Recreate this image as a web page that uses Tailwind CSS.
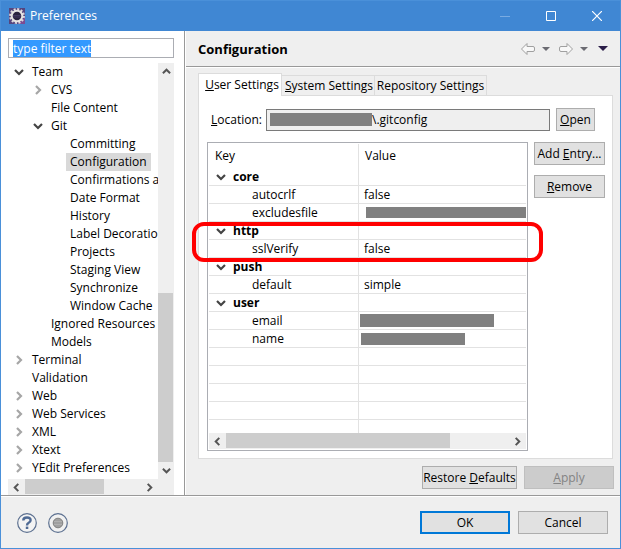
<!DOCTYPE html>
<html lang="en">
<head>
<meta charset="utf-8">
<title>Preferences</title>
<script src="https://cdn.jsdelivr.net/npm/@tailwindcss/browser@4"></script>
</head>
<body class="flex h-screen flex-col overflow-hidden border border-[#4a90d9] bg-[#efefef] font-['Open_Sans','Noto_Sans',sans-serif] text-[12px] leading-[18px] text-black">

<svg class="hidden" aria-hidden="true">
  <symbol id="down" viewBox="0 0 10 10"><path d="M1 3 5 7 9 3" fill="none" stroke="currentColor" stroke-width="2.200"/></symbol>
  <symbol id="right" viewBox="0 0 10 10"><path d="M3 1 7 5 3 9" fill="none" stroke="currentColor" stroke-width="2.200"/></symbol>
  <symbol id="left" viewBox="0 0 10 10"><path d="M7 1 3 5 7 9" fill="none" stroke="currentColor" stroke-width="2.200"/></symbol>
  <symbol id="up" viewBox="0 0 10 10"><path d="M1 7 5 3 9 7" fill="none" stroke="currentColor" stroke-width="2.200"/></symbol>
  <symbol id="caret" viewBox="0 0 8 4"><path d="M0 0h8L4 4z" fill="currentColor"/></symbol>
  <symbol id="arrow" viewBox="0 0 16 14"><path d="M1.500 7 7 1.500V4.500H13Q14.500 4.500 14.500 6V8Q14.500 9.500 13 9.500H7V12.500Z" fill="#f8f8f8" stroke="#a0a0a0" stroke-linejoin="round"/></symbol>
</svg>

<header class="flex h-[30px] shrink-0 items-center bg-[#4087d3] pl-2 text-white">
  <svg class="size-4" viewBox="0 0 16 16" aria-hidden="true">
    <rect width="16" height="16" fill="#54457f"/>
    <path d="M9 16 16 9V16Z" fill="#7c4c92"/>
    <circle cx="8" cy="8" r="6.700" fill="none" stroke="#ddd9dc" stroke-width="2.400" stroke-dasharray="2 1.508"/>
    <circle cx="8" cy="8" r="5.300" fill="#2b2440" stroke="#e6e3e3" stroke-width="2"/>
    <path d="M4 7.500h8M4 9h8" stroke="#4d4470" stroke-width=".7"/>
  </svg>
  <h1 class="ml-[5px]">Preferences</h1>
  <div class="ml-auto flex h-full">
    <button class="flex w-[46px] items-center justify-center" aria-label="Minimize" disabled><svg class="size-[10px]" viewBox="0 0 10 10"><path d="M0 5.500h10" stroke="#79abe2"/></svg></button>
    <button class="flex w-[46px] items-center justify-center" aria-label="Maximize"><svg class="size-[10px]" viewBox="0 0 10 10"><path d="M.5.5h9v9h-9z" fill="none" stroke="white"/></svg></button>
    <button class="flex w-[46px] items-center justify-center" aria-label="Close"><svg class="size-[10px]" viewBox="0 0 10 10"><path d="m0 0 10 10M10 0 0 10" stroke="white" stroke-width="1.200"/></svg></button>
  </div>
</header>

<main class="flex min-h-0 flex-1">
  <aside class="flex w-[184px] shrink-0 flex-col border-r border-[#999] bg-white pt-[7px] pr-[10px] pl-[7px]">
    <input id="filter" type="text" aria-label="Filter preferences" value="type filter text" class="h-[20px] w-full shrink-0 border border-[#abadb3] bg-white px-1 outline-none selection:bg-[#3399ff] selection:text-white">
    <div class="mt-[5px] flex min-h-0 flex-1">
      <nav class="min-w-0 flex-1 overflow-hidden whitespace-nowrap" aria-label="Preference pages">
        <ul>
          <li>
            <div class="flex pl-[6px]"><button class="mr-2 flex w-[10px] items-center text-[#444]" aria-label="Collapse Team"><svg class="size-[10px]"><use href="#down"/></svg></button>Team</div>
            <ul>
              <li class="flex pl-[25px]"><button class="mr-2 flex w-[10px] items-center text-[#a6a6a6]" aria-label="Expand CVS"><svg class="size-[10px]"><use href="#right"/></svg></button>CVS</li>
              <li class="pl-[43px]">File Content</li>
              <li>
                <div class="flex pl-[25px]"><button class="mr-2 flex w-[10px] items-center text-[#444]" aria-label="Collapse Git"><svg class="size-[10px]"><use href="#down"/></svg></button>Git</div>
                <ul class="pl-[58px]">
                  <li class="px-1">Committing</li>
                  <li class="w-fit bg-[#d9d9d9] px-1" aria-current="page">Configuration</li>
                  <li class="px-1">Confirmations and Warnings</li>
                  <li class="px-1">Date Format</li>
                  <li class="px-1">History</li>
                  <li class="px-1">Label Decorations</li>
                  <li class="px-1">Projects</li>
                  <li class="px-1">Staging View</li>
                  <li class="px-1">Synchronize</li>
                  <li class="px-1">Window Cache</li>
                </ul>
              </li>
              <li class="pl-[43px]">Ignored Resources</li>
              <li class="pl-[43px]">Models</li>
            </ul>
          </li>
          <li class="flex pl-[6px]"><button class="mr-2 flex w-[10px] items-center text-[#a6a6a6]" aria-label="Expand Terminal"><svg class="size-[10px]"><use href="#right"/></svg></button>Terminal</li>
          <li class="pl-6">Validation</li>
          <li class="flex pl-[6px]"><button class="mr-2 flex w-[10px] items-center text-[#a6a6a6]" aria-label="Expand Web"><svg class="size-[10px]"><use href="#right"/></svg></button>Web</li>
          <li class="flex pl-[6px]"><button class="mr-2 flex w-[10px] items-center text-[#a6a6a6]" aria-label="Expand Web Services"><svg class="size-[10px]"><use href="#right"/></svg></button>Web Services</li>
          <li class="flex pl-[6px]"><button class="mr-2 flex w-[10px] items-center text-[#a6a6a6]" aria-label="Expand XML"><svg class="size-[10px]"><use href="#right"/></svg></button>XML</li>
          <li class="flex pl-[6px]"><button class="mr-2 flex w-[10px] items-center text-[#a6a6a6]" aria-label="Expand Xtext"><svg class="size-[10px]"><use href="#right"/></svg></button>Xtext</li>
          <li class="flex pl-[6px]"><button class="mr-2 flex w-[10px] items-center text-[#a6a6a6]" aria-label="Expand YEdit Preferences"><svg class="size-[10px]"><use href="#right"/></svg></button>YEdit Preferences</li>
        </ul>
      </nav>
      <div class="flex w-4 flex-col bg-[#efefef] text-[#555]">
        <button class="flex h-[17px] items-center justify-center" aria-label="Scroll up"><svg class="size-[9px]"><use href="#up"/></svg></button>
        <div class="grow-[212]"></div>
        <div class="w-[15px] grow-[169] bg-[#cdcdcd]"></div>
        <button class="flex h-[17px] items-center justify-center" aria-label="Scroll down"><svg class="size-[9px]"><use href="#down"/></svg></button>
      </div>
    </div>
    <div class="flex h-4 shrink-0 bg-[#efefef] pr-4 text-[#555]">
      <button class="flex w-[17px] items-center justify-center" aria-label="Scroll left"><svg class="size-[9px]"><use href="#left"/></svg></button>
      <div class="h-[15px] grow-[79] bg-[#cdcdcd]"></div>
      <div class="grow-[37]"></div>
      <button class="flex w-[17px] items-center justify-center" aria-label="Scroll right"><svg class="size-[9px]"><use href="#right"/></svg></button>
    </div>
  </aside>

  <section class="flex min-w-0 flex-1 flex-col border-l border-white">
    <div class="border-b border-[#999]">
      <div class="flex h-[35px] items-center px-3">
        <h2 class="text-[13px] font-bold">Configuration</h2>
        <div class="ml-auto flex items-center text-[#6b6b72]">
          <button aria-label="Back"><svg class="h-[14px] w-4"><use href="#arrow"/></svg></button>
          <button class="ml-[6px]" aria-label="Back history"><svg class="h-1 w-2"><use href="#caret"/></svg></button>
          <button class="ml-2 -scale-x-100" aria-label="Forward"><svg class="h-[14px] w-4"><use href="#arrow"/></svg></button>
          <button class="ml-[6px]" aria-label="Forward history"><svg class="h-1 w-2"><use href="#caret"/></svg></button>
          <button class="ml-[10px] text-[#2a1d48]" aria-label="Menu"><svg class="h-[5px] w-[10px]"><use href="#caret"/></svg></button>
        </div>
      </div>
    </div>
    <div class="flex min-h-0 flex-1 flex-col border-t border-white pt-[5px] pr-[6px] pb-[6px] pl-3">
      <div class="relative z-10 flex items-end whitespace-nowrap" role="tablist">
        <button role="tab" aria-selected="true" class="-mb-px h-[23px] w-[84px] border border-b-0 border-[#dcdcdc] bg-white pl-1"><u>U</u>ser Settings</button>
        <button role="tab" aria-selected="false" class="h-5 w-[93px] border-t border-r border-[#dcdcdc] pl-[2px]"><u>S</u>ystem Settings</button>
        <button role="tab" aria-selected="false" class="h-5 w-[112px] border-t border-r border-[#dcdcdc]">Repository Sett<u>i</u>ngs</button>
      </div>
      <div role="tabpanel" class="mr-px flex min-h-0 flex-1 flex-col border border-[#dcdcdc] bg-white pt-3 pr-[7px] pb-[7px] pl-2">
        <div class="flex items-center pr-[10px]">
          <label for="location" class="w-[59px] pl-1"><u>L</u>ocation:</label>
          <div class="relative flex-1">
            <input id="location" type="text" readonly value="\.gitconfig" class="block h-[22px] w-full border border-[#7a7a7a] bg-[#efefef] pl-[105px] outline-none">
            <span class="absolute top-1 left-1 h-[13px] w-[102px] bg-[#808080]"></span>
          </div>
          <button class="ml-[6px] h-[23px] w-[39px] border border-[#adadad] bg-[#e1e1e1]"><u>O</u>pen</button>
        </div>
        <div class="mt-[11px] flex min-h-0 flex-1">
          <div class="relative flex min-w-0 flex-1 flex-col border border-[#abadb3] p-px">
            <div class="min-h-0 flex-1 overflow-hidden">
              <table class="w-full table-fixed border-separate border-spacing-0 text-left whitespace-nowrap">
                <colgroup><col class="w-[150px]"><col></colgroup>
                <thead><tr class="h-[24px]"><th class="border-r border-[#e2e2e2] p-0 pl-[6px] font-normal">Key</th><th class="p-0 pl-[6px] font-normal">Value</th></tr></thead>
                <tbody class="[&_td]:h-[18px] [&_td]:border-b [&_td]:border-[#e2e2e2] [&_td]:p-0 [&_td]:leading-[17px] [&_td:first-child]:border-r">
                  <tr><td class="font-bold"><div class="flex pl-[7px]"><button class="mr-[7px] flex w-[10px] items-center text-[#444]" aria-label="Collapse core"><svg class="size-[10px]"><use href="#down"/></svg></button>core</div></td><td></td></tr>
                  <tr><td><div class="pl-[43px]">autocrlf</div></td><td><div class="pl-[5px]">false</div></td></tr>
                  <tr><td><div class="pl-[43px]">excludesfile</div></td><td><div class="ml-[7px] h-[11px] bg-[#808080]"></div></td></tr>
                  <tr><td class="font-bold"><div class="flex pl-[7px]"><button class="mr-[7px] flex w-[10px] items-center text-[#444]" aria-label="Collapse http"><svg class="size-[10px]"><use href="#down"/></svg></button>http</div></td><td></td></tr>
                  <tr><td><div class="pl-[43px]">sslVerify</div></td><td><div class="pl-[5px]">false</div></td></tr>
                  <tr><td class="font-bold"><div class="flex pl-[7px]"><button class="mr-[7px] flex w-[10px] items-center text-[#444]" aria-label="Collapse push"><svg class="size-[10px]"><use href="#down"/></svg></button>push</div></td><td></td></tr>
                  <tr><td><div class="pl-[43px]">default</div></td><td><div class="pl-[5px]">simple</div></td></tr>
                  <tr><td class="font-bold"><div class="flex pl-[7px]"><button class="mr-[7px] flex w-[10px] items-center text-[#444]" aria-label="Collapse user"><svg class="size-[10px]"><use href="#down"/></svg></button>user</div></td><td></td></tr>
                  <tr><td><div class="pl-[43px]">email</div></td><td><div class="ml-px h-[13px] w-[134px] bg-[#808080]"></div></td></tr>
                  <tr><td><div class="pl-[43px]">name</div></td><td><div class="ml-[2px] h-3 w-[104px] bg-[#808080]"></div></td></tr>
                  <tr><td></td><td></td></tr>
                  <tr><td></td><td></td></tr>
                  <tr><td></td><td></td></tr>
                  <tr><td></td><td></td></tr>
                  <tr><td></td><td></td></tr>
                </tbody>
              </table>
            </div>
            <div class="flex h-4 shrink-0 bg-[#efefef] text-[#555]">
              <button class="flex w-[17px] items-center justify-center" aria-label="Scroll left"><svg class="size-[9px]"><use href="#left"/></svg></button>
              <div class="h-[15px] grow-[224] bg-[#cdcdcd]"></div>
              <div class="grow-[59]"></div>
              <button class="flex w-[17px] items-center justify-center" aria-label="Scroll right"><svg class="size-[9px]"><use href="#right"/></svg></button>
            </div>
            <!-- Highlight around the http section -->
            <div class="pointer-events-none absolute top-[79px] -right-4 -left-4 h-10 rounded-[12px] border-4 border-[#ff0000]"></div>
          </div>
          <div class="ml-[6px] flex w-[71px] flex-col gap-[10px]">
            <button class="h-[23px] border border-[#adadad] bg-[#e1e1e1] whitespace-nowrap">Add <u>E</u>ntry...</button>
            <button class="h-[23px] border border-[#adadad] bg-[#e1e1e1]"><u>R</u>emove</button>
          </div>
        </div>
      </div>
      <div class="mt-[7px] flex justify-end gap-[7px]">
        <button class="h-[23px] w-[95px] border border-[#adadad] bg-[#e1e1e1] whitespace-nowrap">Restore <u>D</u>efaults</button>
        <button class="h-[23px] w-[90px] border border-[#bfbfbf] bg-[#cccccc] text-[#838383]" disabled><u>A</u>pply</button>
      </div>
    </div>
  </section>
</main>

<footer class="shrink-0 border-t border-[#999]">
  <div class="flex h-[52px] items-center border-t border-white pr-3 pl-4">
    <button aria-label="Help"><svg class="size-5" viewBox="0 0 20 20"><circle cx="10" cy="10" r="9.300" fill="#f3f3f3" stroke="#5c7090" stroke-width="1.200"/><path d="M6.300 7.500Q6.300 4.500 10 4.500T13.600 7.300Q13.600 8.800 11.700 9.800 10 10.700 10 12.500" fill="none" stroke="#4f6a94" stroke-width="2.400"/><rect x="8.800" y="13.600" width="2.500" height="2.400" fill="#4f6a94"/></svg></button>
    <button class="ml-[11px]" aria-label="Oomph recorder"><svg class="size-5" viewBox="0 0 20 20"><circle cx="10" cy="10" r="9.300" fill="#f1f1f1" stroke="#5c7090" stroke-width="1.200"/><circle cx="10" cy="10" r="4.800" fill="#a0a0a0" stroke="#808080"/><path d="M6 8.500h8M6 11.500h8" stroke="#b0b0b0"/></svg></button>
    <button class="ml-auto h-[23px] w-[90px] border-2 border-[#0078d7] bg-[#e1e1e1] leading-4">OK</button>
    <button class="ml-2 h-[23px] w-[90px] border border-[#adadad] bg-[#e1e1e1]">Cancel</button>
  </div>
</footer>

<script>
  const filter = document.getElementById('filter');
  filter.focus();
  filter.select();
</script>
</body>
</html>
